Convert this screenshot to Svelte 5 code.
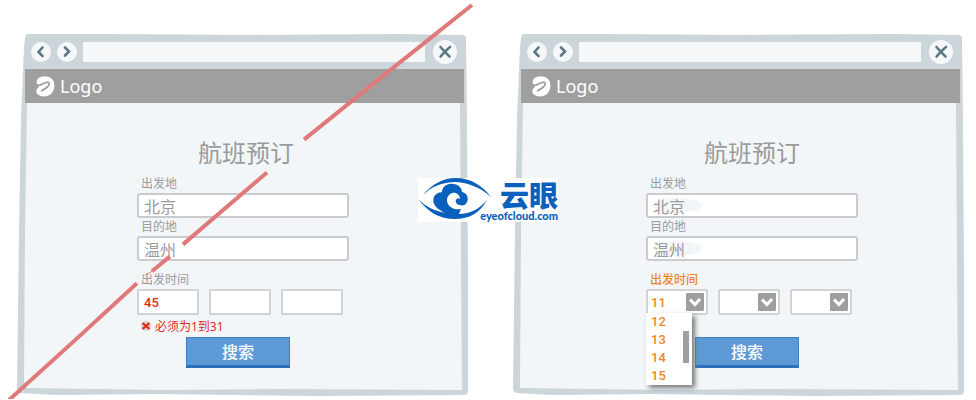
<script lang="ts">
  type Variant = "text" | "select";

  const days = ["12", "13", "14", "15"];
  const dateParts = [
    { name: "day", label: "日" },
    { name: "month", label: "月" },
    { name: "year", label: "年" },
  ];

  let departure = $state("北京");
  let destination = $state("温州");
  let typedDay = $state("45");
</script>

{#snippet booking(variant: Variant)}
  <section class="window window--{variant}">
    <svg class="frame" viewBox="0 0 452 363" preserveAspectRatio="none" aria-hidden="true">
      <path
        d="M10 0 L90 0 L230 1 L380 0 L446 1 Q449 2 449 5 L450 90 L451 240 L451 358 Q451 362 447 362 L300 363 L140 361 L40 362 L3 360 Q0 359 0 355 L2 200 L4 84 L7 14 Q8 0 10 0 Z"
        fill="#cbd5da"
      />
      <path d="M10 68 L443 68 L444 230 L445 357 L260 356 L150 357 L7 355 L8 200 Z" fill="#f2f6f8" />
    </svg>

    <div class="titlebar">
      <button class="round" type="button" aria-label="后退">
        <svg viewBox="0 0 20 20"><path d="M11.5 5.5 L7.5 10 L11.5 14" /></svg>
      </button>
      <button class="round" type="button" aria-label="前进">
        <svg viewBox="0 0 20 20"><path d="M8 5.5 L12 9.5 L8 13.5" /></svg>
      </button>
      <input class="address" type="text" aria-label="地址" />
      <button class="round round--close" type="button" aria-label="关闭">
        <svg viewBox="0 0 24 24"><path d="M7.5 7 Q11 11 16.5 16.5 M17 7 Q12 11 7.5 16.5" /></svg>
      </button>
    </div>

    <header class="brand">
      <svg class="brand-mark" viewBox="0 0 19 21" aria-hidden="true">
        <path
          d="M0.5 6 Q1 0.5 9 0.3 Q18.5 1 18.5 10 Q17.5 20 8 20.5 Q1 20 0.3 15.5 Q0 13 2.5 11.5 L2.5 8.5 Q0.5 8 0.5 6 Z"
          fill="#fff"
        />
        <path
          d="M0 10 Q4 9.5 8 7.2 Q13 5.2 13.3 7.6 Q13 11 5 15"
          fill="none"
          stroke="#9f9f9f"
          stroke-width="1.7"
        />
      </svg>
      <span>Logo</span>
    </header>

    <form class="form">
      <h1>航班预订</h1>

      <label for="{variant}-from">出发地</label>
      <input class="field" id="{variant}-from" type="text" bind:value={departure} />

      <label for="{variant}-to">目的地</label>
      <input class="field" id="{variant}-to" type="text" bind:value={destination} />

      <label class="date-label" for="{variant}-day">出发时间</label>
      <div class="date">
        {#each dateParts as part, i}
          {#if variant === "text"}
            {#if i === 0}
              <input
                class="part"
                id="text-day"
                type="text"
                aria-label={part.label}
                aria-invalid="true"
                bind:value={typedDay}
              />
            {:else}
              <input class="part" type="text" aria-label={part.label} />
            {/if}
          {:else}
            <div class="picker">
              <select class="part" id="select-{part.name}" aria-label={part.label}>
                <option>{i === 0 ? "11" : ""}</option>
              </select>
              <svg class="chevron" viewBox="0 0 18 18" aria-hidden="true">
                <rect width="18" height="18" rx="1" fill="#9f9f9f" />
                <path d="M4 6.5 L9 11.5 L14 6" fill="none" stroke="#fff" stroke-width="3" />
              </svg>
              {#if i === 0}
                <ul class="menu" role="listbox" aria-label={part.label}>
                  {#each days as day}
                    <li role="option" aria-selected="false">{day}</li>
                  {/each}
                </ul>
              {/if}
            </div>
          {/if}
        {/each}
      </div>

      <div class="message">
        {#if variant === "text"}
          <svg viewBox="0 0 10 10" aria-hidden="true">
            <circle cx="5" cy="5" r="5" fill="#d3cfcb" />
            <path d="M1.5 2 L8.5 8 M8.5 2 L1.5 8" stroke="#e2291c" stroke-width="2.2" />
          </svg>
          <span role="alert">必须为1到31</span>
        {/if}
      </div>

      <button class="search" type="button">搜索</button>
    </form>

    {#if variant === "text"}
      <svg class="strike" viewBox="0 0 480 400" preserveAspectRatio="none" aria-hidden="true">
        <path d="M472 5 L388 72 L304 140 M267 173 L183 245 M170 257 L152 272 M137 284 L74 342 L9 401" />
        <path class="strike-thin" d="M152 272 L145 276" />
      </svg>
    {/if}
  </section>
{/snippet}

<main class="page">
  {@render booking("text")}
  {@render booking("select")}

  <div class="watermark">
    <svg class="eye" viewBox="0 0 74 44" aria-hidden="true">
      <path d="M5 17 C14 6 25 0 38 0 C53 0 65 8 73 19 C62 9 50 5 38 4 C24 4 13 9 5 17 Z" />
      <path d="M0 21 C10 31 22 35 37 36 C52 37 61 31 69 22 C62 35 51 41 37 41 C21 41 10 34 0 21 Z" />
      <path
        d="M22 32 C14 28 13 18 20 15 C22 14 24 15 24 13 C25 7 31 5 36 6 C41 7 44 10 44 14 C49 15 51 20 49 24 C48 27 45 28 42 27 C39 27 37 24 38 22 C39 20 41 20 42 21 C42 17 38 14 34 15 C29 17 28 22 30 26 C32 30 37 32 43 31 L40 38 C33 38 27 36 22 32 Z"
      />
    </svg>
    <div class="watermark-text">
      <strong>云眼</strong>
      <span>eyeofcloud.com</span>
    </div>
  </div>
</main>

<style>
  :global(body) {
    margin: 0;
    background: #fff;
  }

  .page {
    position: relative;
    display: grid;
    grid-template-columns: 1fr 1fr;
    gap: 44px;
    padding: 34px 11px 3px 17px;
    overflow: hidden;
    color: #9b9b9b;
    font-family: "Noto Sans", "Noto Sans CJK SC", sans-serif;
  }

  .page * {
    box-sizing: border-box;
  }

  button,
  input,
  select {
    margin: 0;
    padding: 0;
    border: 0;
    border-radius: 0;
    color: inherit;
    font-family: inherit;
    outline: none;
  }

  .window {
    position: relative;
    min-width: 0;
  }

  .frame {
    position: absolute;
    inset: 0;
    z-index: -1;
    width: 100%;
    height: 100%;
  }

  .titlebar {
    display: flex;
    align-items: center;
    gap: 6px;
    height: 35px;
    padding: 0 12px 0 14px;
  }

  .round {
    flex: none;
    width: 20px;
    height: 20px;
    border-radius: 50%;
    background: #f5f7f9;
  }

  .round--close {
    width: 24px;
    height: 24px;
  }

  .round svg {
    display: block;
    width: 100%;
    height: 100%;
    fill: none;
    stroke: #5b7986;
    stroke-width: 2.6;
    stroke-linecap: round;
  }

  .address {
    flex: 1;
    min-width: 0;
    height: 20px;
    margin-right: 2px;
    background: #f5f7f9;
  }

  .brand {
    display: flex;
    align-items: center;
    gap: 5px;
    height: 34px;
    margin: 0 5px 0 8px;
    padding-left: 11px;
    background: #9f9f9f;
    color: #fff;
    font-size: 18px;
  }

  .brand-mark {
    width: 19px;
    height: 21px;
  }

  .form {
    display: flex;
    flex-direction: column;
    width: 212px;
    max-width: 100%;
    margin: 0 auto;
    padding: 36px 0 28px;
  }

  .window--select .form {
    margin-left: calc(50% - 93px);
  }

  h1 {
    margin: 0 0 8px;
    font-size: 24px;
    font-weight: 400;
    line-height: 28px;
    text-align: center;
  }

  .window--text h1 {
    padding-left: 6px;
  }

  label {
    padding-left: 4px;
    font-size: 12px;
    line-height: 18px;
  }

  .field,
  .part {
    border: 2px solid #cacbcc;
    border-radius: 3px;
    background-color: #fff;
  }

  .field {
    width: 100%;
    height: 25px;
    padding-left: 5px;
    font-size: 16px;
  }

  .window--select .field {
    background-image: radial-gradient(closest-side, #f2f6f8 96%, transparent);
    background-position: 4px 3px;
    background-size: 50px 15px;
    background-repeat: no-repeat;
  }

  .date-label {
    margin-top: 10px;
  }

  .date {
    display: flex;
    gap: 10px;
  }

  .part {
    width: 62px;
    height: 26px;
    padding-left: 5px;
    border-color: #d2d3d4;
    border-radius: 2px;
    color: #e2291c;
    font-family: Roboto, sans-serif;
    font-size: 13px;
    font-weight: 500;
  }

  .picker {
    position: relative;
  }

  .picker .part {
    display: block;
    padding-left: 3px;
    appearance: none;
  }

  .window--select .part,
  .window--select .date-label,
  .menu {
    color: #f0871e;
  }

  .window--select .date-label {
    font-weight: 500;
  }

  .chevron {
    position: absolute;
    top: 4px;
    right: 4px;
    width: 18px;
    height: 18px;
    pointer-events: none;
  }

  .menu {
    position: absolute;
    top: 24px;
    left: 0;
    z-index: 1;
    width: 46px;
    margin: 0;
    padding: 0 0 0 5px;
    background: #fff;
    box-shadow: 3px 3px 5px #777;
    font-family: Roboto, sans-serif;
    font-size: 13px;
    font-weight: 500;
    line-height: 18px;
    list-style: none;
  }

  .menu::after {
    content: "";
    position: absolute;
    top: 18px;
    right: 3px;
    width: 6px;
    height: 32px;
    background: #9f9f9f;
  }

  .message {
    display: flex;
    align-items: center;
    gap: 4px;
    height: 22px;
    padding-left: 4px;
    color: #e2291c;
    font-size: 12px;
  }

  .message svg {
    width: 10px;
    height: 10px;
  }

  .search {
    width: 104px;
    height: 31px;
    margin-left: 49px;
    border: 1px solid #3c7fc4;
    border-bottom: 3px solid #2b70b8;
    background: #5e9bd6;
    color: #fff;
    font-size: 16px;
    font-weight: 500;
    line-height: 24px;
  }

  .strike {
    position: absolute;
    top: -34px;
    left: -17px;
    width: calc(100% + 28px);
    height: calc(100% + 37px);
    fill: none;
    stroke: #e07a7a;
    stroke-width: 4;
    pointer-events: none;
  }

  .strike-thin {
    stroke-width: 1;
  }

  .watermark {
    position: absolute;
    top: 50%;
    left: 50%;
    display: flex;
    width: 140px;
    height: 44px;
    background: #fff;
    color: #0a60bd;
    transform: translate(-50%, -50%);
  }

  .eye {
    flex: none;
    width: 74px;
    height: 44px;
    fill: #0a60bd;
  }

  .watermark-text {
    display: flex;
    flex: 1;
    flex-direction: column;
    align-items: flex-end;
    margin-left: -14px;
    white-space: nowrap;
  }

  .watermark-text strong {
    font-family: "Noto Sans CJK SC", sans-serif;
    font-size: 29px;
    font-weight: 900;
    line-height: 32px;
  }

  .watermark-text span {
    font-family: Lato, sans-serif;
    font-size: 11px;
    font-weight: 900;
    line-height: 11px;
  }
</style>
